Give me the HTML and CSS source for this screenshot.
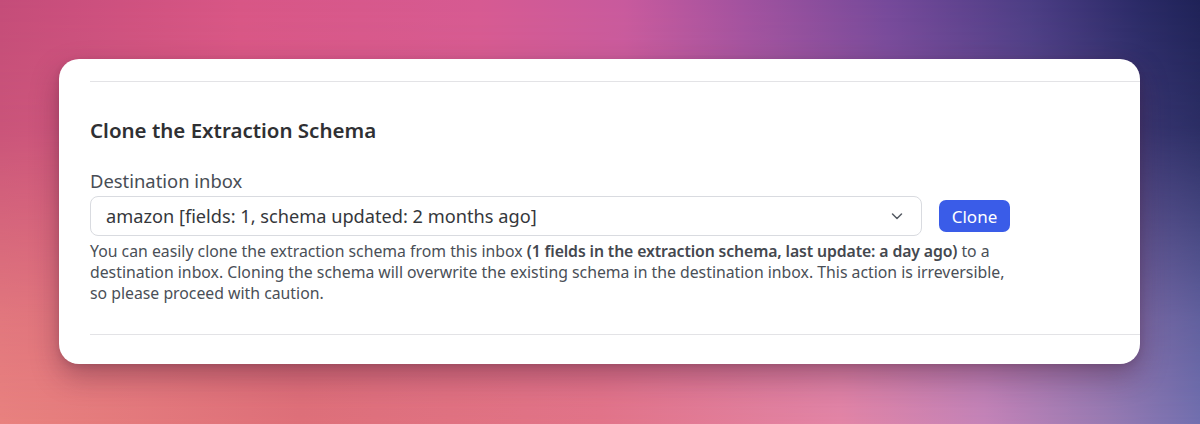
FILE: index.html
```html
<!DOCTYPE html>
<html lang="en">
<head>
<meta charset="utf-8">
<title>Clone the Extraction Schema</title>
<link rel="stylesheet" href="styles.css">
</head>
<body>
<div class="backdrop"></div>
<main class="card">
  <div class="rule"></div>
  <section class="section">
    <h2 class="title">Clone the Extraction Schema</h2>
    <label class="label" for="dest">Destination inbox</label>
    <div class="row">
      <div class="select" id="dest">
        <span class="select-text">amazon [fields: 1, schema updated: 2 months ago]</span>
        <svg class="chevron" width="14" height="14" viewBox="0 0 14 14" aria-hidden="true"><path d="M2.5 5l4.5 4.5L11.5 5" fill="none" stroke="#555b63" stroke-width="1.5" stroke-linecap="round" stroke-linejoin="round"/></svg>
      </div>
      <button class="btn" type="button">Clone</button>
    </div>
    <p class="help">You can easily clone the extraction schema from this inbox <b>(1 fields in the extraction schema, last update: a day ago)</b> to a destination inbox. Cloning the schema will overwrite the existing schema in the destination inbox. This action is irreversible, so please proceed with caution.</p>
  </section>
  <div class="rule"></div>
</main>
</body>
</html>
```
FILE: styles.css
```css
html, body {
  margin: 0;
  height: 100%;
}
body {
  position: relative;
  overflow: hidden;
  font-family: "Noto Sans", "Open Sans", "DejaVu Sans", sans-serif;
  background: linear-gradient(to right, #e9827f 0%, #de7079 25%, #e27489 50%, #e385a6 70%, #c584b8 82%, #9a7bb3 92%, #7270b0 100%);
  padding: 59px 60px 0 59px;
  box-sizing: border-box;
}
.backdrop {
  position: absolute;
  inset: 0;
  z-index: -1;
  background: linear-gradient(to right, #c44c79 0%, #d85686 20%, #d65a92 40%, #c85a9d 52%, #a2529f 62%, #75499a 74%, #4b3d84 86%, #2a2a66 95%, #1f2257 100%);
  -webkit-mask-image: linear-gradient(to bottom, #000 0%, rgba(0,0,0,0.85) 30%, rgba(0,0,0,0.2) 75%, transparent 100%);
  mask-image: linear-gradient(to bottom, #000 0%, rgba(0,0,0,0.85) 30%, rgba(0,0,0,0.2) 75%, transparent 100%);
}
.card {
  background: #fff;
  border-radius: 20px;
  height: 305px;
  box-sizing: border-box;
  padding: 22px 0 0 31px;
  box-shadow: 0 12px 28px rgba(70, 25, 50, 0.38), 0 2px 6px rgba(70, 25, 50, 0.15);
}
.rule {
  border-top: 1px solid #e3e3e6;
}
.section {
  padding: 34px 0 30px;
}
.title {
  margin: 0;
  font-size: 20.5px;
  line-height: 28px;
  font-weight: 600;
  color: #2f3033;
}
.label {
  display: block;
  margin-top: 25px;
  font-size: 18.4px;
  line-height: 24px;
  color: #484d55;
}
.row {
  display: flex;
  align-items: center;
  gap: 17px;
  margin-top: 3px;
}
.select {
  width: 832px;
  height: 40px;
  box-sizing: border-box;
  border: 1px solid #d9dbe0;
  border-radius: 8px;
  display: flex;
  align-items: center;
  justify-content: space-between;
  padding: 0 17px 0 15px;
}
.select-text {
  font-size: 18.2px;
  color: #35373b;
}
.chevron {
  display: block;
}
.btn {
  font-family: inherit;
  height: 32px;
  width: 71px;
  border: 0;
  border-radius: 7px;
  background: #3a5ce8;
  color: #fff;
  font-size: 17px;
  padding: 0;
}
.help {
  margin: 5px 0 0;
  width: 920px;
  font-size: 15.8px;
  line-height: 21px;
  color: #4a4f57;
}
.help b {
  font-weight: 600;
  letter-spacing: -0.12px;
  color: #44484f;
}
```
